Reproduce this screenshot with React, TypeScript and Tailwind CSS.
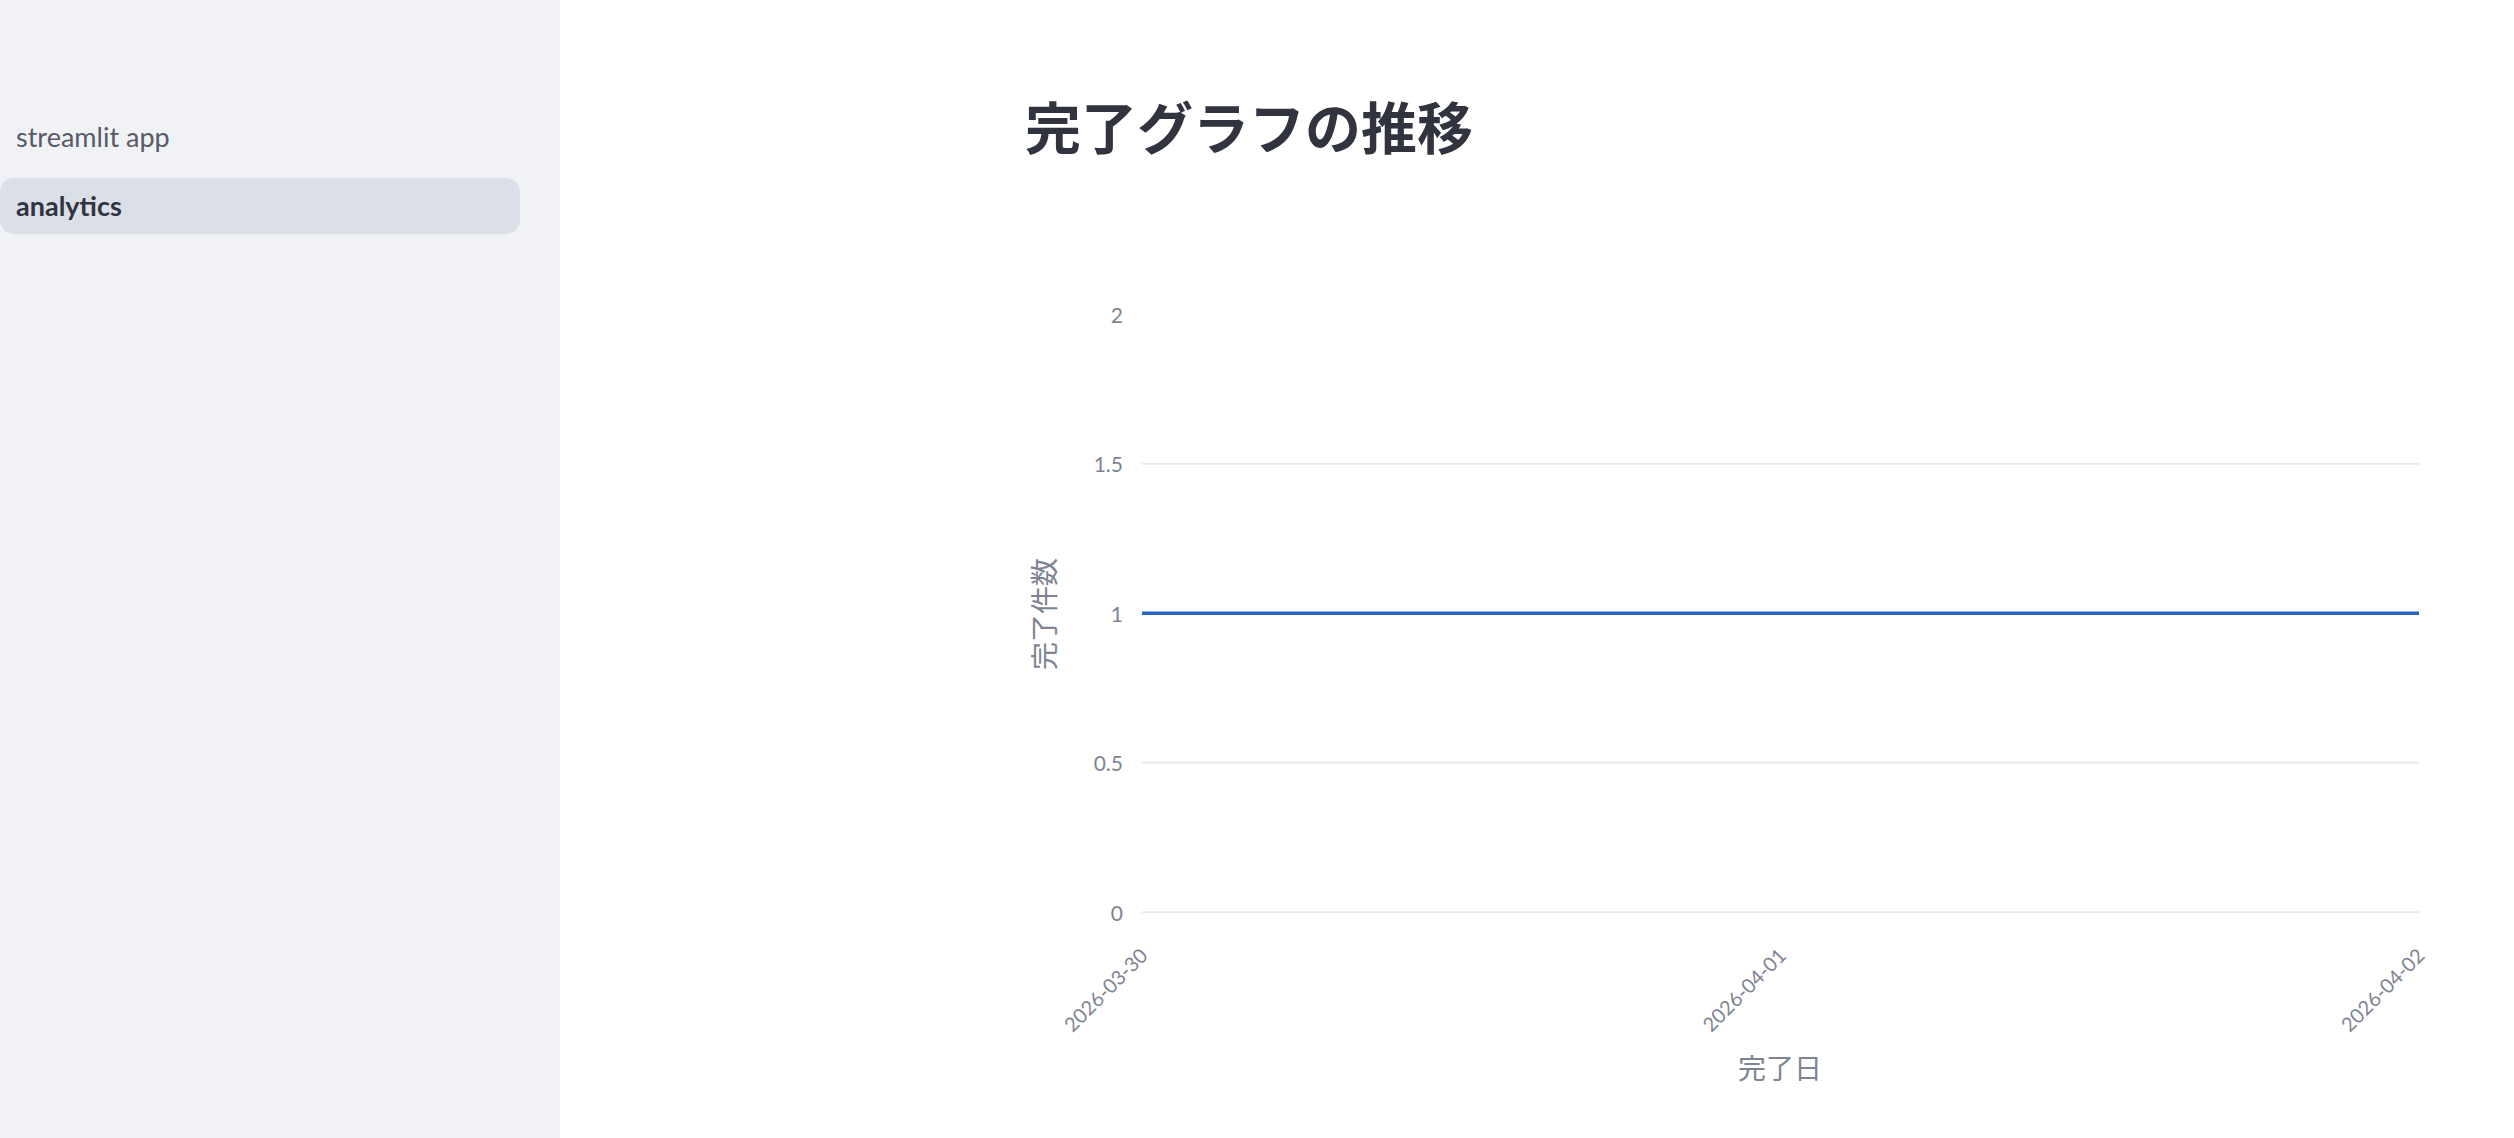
import React from "react"

const sans = "font-['Lato','Noto_Sans_CJK_JP',sans-serif]"

const navItems = [
  { label: "streamlit app", active: false },
  { label: "analytics", active: true },
]

// chart geometry (px inside the svg, svg starts 80px left of the title)
const off = 80
const plot = { x0: 117 + off, x1: 1394 + off }
const yOf = (v: number) => 662 - v * 298.7
const yTicks = [
  { v: 2, label: "2", grid: false },
  { v: 1.5, label: "1.5", grid: true },
  { v: 1, label: "1", grid: true },
  { v: 0.5, label: "0.5", grid: true },
  { v: 0, label: "0", grid: true },
]
const xTicks = [
  { x: plot.x0, label: "2026-03-30" },
  { x: (plot.x0 + plot.x1) / 2, label: "2026-04-01" },
  { x: plot.x1, label: "2026-04-02" },
]

function Sidebar() {
  return (
    <aside className="w-[560px] shrink-0 min-h-screen bg-[#f0f2f6]">
      <nav className="flex flex-col gap-[13px] pt-[109px]">
        {navItems.map((item) => (
          <div
            key={item.label}
            className={`flex h-[56px] w-[520px] items-center rounded-[14px] px-4 text-[27px] ${sans} ${
              item.active ? "bg-[#dadfe8] font-bold text-[#31333f]" : "text-[#585a66]"
            }`}
          >
            {item.label}
          </div>
        ))}
      </nav>
    </aside>
  )
}

function CompletionChart() {
  const yTitleX = 18 + off
  const xTickY = 707
  return (
    <svg width={1520} height={860} className="mt-[97px] ml-[-80px] block">
      {yTicks
        .filter((t) => t.grid)
        .map((t) => (
          <line key={t.v} x1={plot.x0} x2={plot.x1} y1={yOf(t.v)} y2={yOf(t.v)} stroke="#e4e8ef" strokeWidth={1.75} />
        ))}
      <line x1={plot.x0} x2={plot.x1} y1={yOf(1)} y2={yOf(1)} stroke="#2964c4" strokeWidth={3.5} />

      {yTicks.map((t) => (
        <text
          key={t.label}
          x={98 + off}
          y={yOf(t.v)}
          textAnchor="end"
          dominantBaseline="central"
          fontSize={21}
          fill="#7f8493"
          fontFamily="Lato, sans-serif"
        >
          {t.label}
        </text>
      ))}

      {xTicks.map((t) => (
        <text
          key={t.label}
          x={t.x + 7}
          y={xTickY}
          textAnchor="end"
          fontSize={20}
          fill="#7f8493"
          fontFamily="Lato, sans-serif"
          transform={`rotate(-45 ${t.x + 7} ${xTickY})`}
        >
          {t.label}
        </text>
      ))}

      <text
        x={yTitleX}
        y={364}
        textAnchor="middle"
        dominantBaseline="central"
        fontSize={28}
        fill="#7f8493"
        fontFamily="'Noto Sans CJK JP', sans-serif"
        transform={`rotate(-90 ${yTitleX} 364)`}
      >
        完了件数
      </text>
      <text
        x={755 + off}
        y={817}
        textAnchor="middle"
        dominantBaseline="central"
        fontSize={28}
        fill="#7f8493"
        fontFamily="'Noto Sans CJK JP', sans-serif"
      >
        完了日
      </text>
    </svg>
  )
}

export default function App() {
  return (
    <div className="flex min-h-screen bg-white">
      <Sidebar />
      <main className="flex-1 pl-[465px] pt-[97px]">
        <h1 className="text-[56px] font-bold leading-none text-[#31333f] font-['Noto_Sans_CJK_JP',sans-serif]">
          完了グラフの推移
        </h1>
        <CompletionChart />
      </main>
    </div>
  )
}
